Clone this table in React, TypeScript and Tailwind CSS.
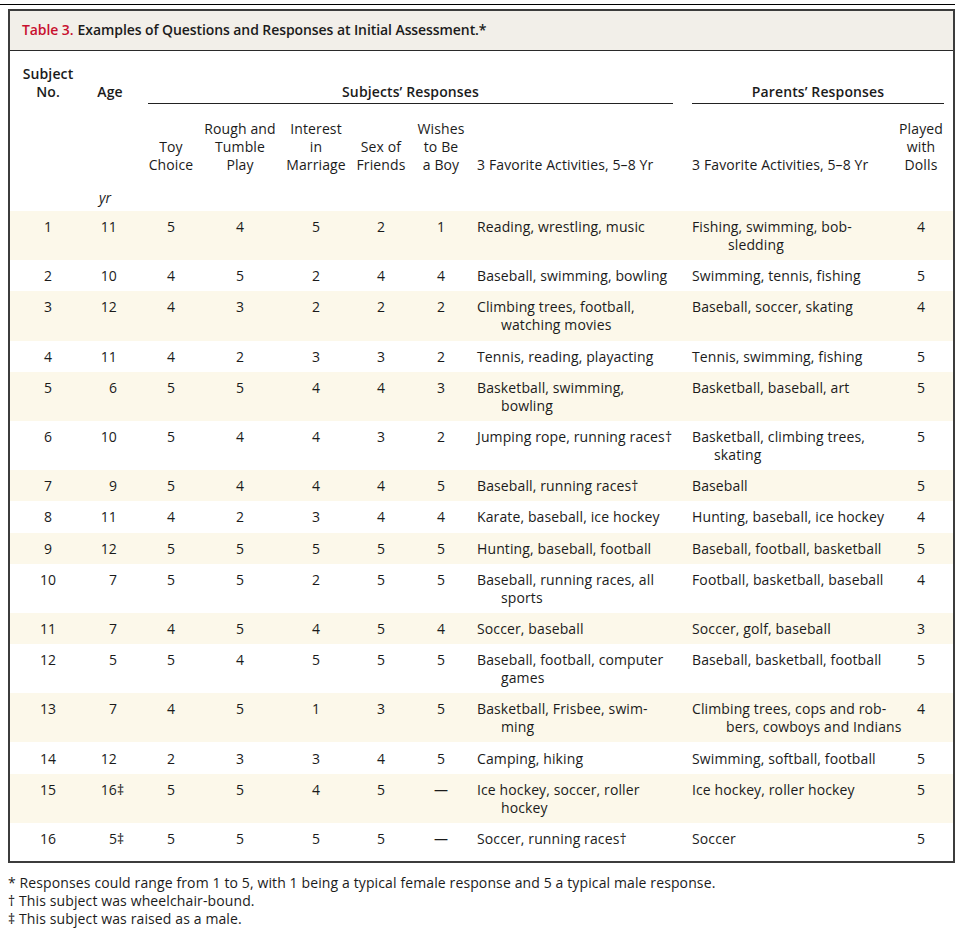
import React from "react";

type Row = {
  no: string;
  age: string;
  ageMark?: boolean;
  v: string[];
  subj: string[];
  subjIndent?: number;
  par: string[];
  parIndent?: number;
  dolls: string;
};

const rows: Row[] = [
  { no: "1", age: "11", v: ["5", "4", "5", "2", "1"], subj: ["Reading, wrestling, music"], par: ["Fishing, swimming, bob-", "sledding"], parIndent: 36, dolls: "4" },
  { no: "2", age: "10", v: ["4", "5", "2", "4", "4"], subj: ["Baseball, swimming, bowling"], par: ["Swimming, tennis, fishing"], dolls: "5" },
  { no: "3", age: "12", v: ["4", "3", "2", "2", "2"], subj: ["Climbing trees, football,", "watching movies"], subjIndent: 24, par: ["Baseball, soccer, skating"], dolls: "4" },
  { no: "4", age: "11", v: ["4", "2", "3", "3", "2"], subj: ["Tennis, reading, playacting"], par: ["Tennis, swimming, fishing"], dolls: "5" },
  { no: "5", age: "6", v: ["5", "5", "4", "4", "3"], subj: ["Basketball, swimming,", "bowling"], par: ["Basketball, baseball, art"], dolls: "5" },
  { no: "6", age: "10", v: ["5", "4", "4", "3", "2"], subj: ["Jumping rope, running races†"], par: ["Basketball, climbing trees,", "skating"], parIndent: 22, dolls: "5" },
  { no: "7", age: "9", v: ["5", "4", "4", "4", "5"], subj: ["Baseball, running races†"], par: ["Baseball"], dolls: "5" },
  { no: "8", age: "11", v: ["4", "2", "3", "4", "4"], subj: ["Karate, baseball, ice hockey"], par: ["Hunting, baseball, ice hockey"], dolls: "4" },
  { no: "9", age: "12", v: ["5", "5", "5", "5", "5"], subj: ["Hunting, baseball, football"], par: ["Baseball, football, basketball"], dolls: "5" },
  { no: "10", age: "7", v: ["5", "5", "2", "5", "5"], subj: ["Baseball, running races, all", "sports"], par: ["Football, basketball, baseball"], dolls: "4" },
  { no: "11", age: "7", v: ["4", "5", "4", "5", "4"], subj: ["Soccer, baseball"], par: ["Soccer, golf, baseball"], dolls: "3" },
  { no: "12", age: "5", v: ["5", "4", "5", "5", "5"], subj: ["Baseball, football, computer", "games"], par: ["Baseball, basketball, football"], dolls: "5" },
  { no: "13", age: "7", v: ["4", "5", "1", "3", "5"], subj: ["Basketball, Frisbee, swim-", "ming"], par: ["Climbing trees, cops and rob-", "bers, cowboys and Indians"], parIndent: 34, dolls: "4" },
  { no: "14", age: "12", v: ["2", "3", "3", "4", "5"], subj: ["Camping, hiking"], par: ["Swimming, softball, football"], dolls: "5" },
  { no: "15", age: "16", ageMark: true, v: ["5", "5", "4", "5", "—"], subj: ["Ice hockey, soccer, roller", "hockey"], par: ["Ice hockey, roller hockey"], dolls: "5" },
  { no: "16", age: "5", ageMark: true, v: ["5", "5", "5", "5", "—"], subj: ["Soccer, running races†"], par: ["Soccer"], dolls: "5" },
];

const GRID = "grid grid-cols-[76px_48px_74px_64px_88px_42px_72px_215px_206px_52px]";

function Lines({ lines, indent }: { lines: string[]; indent?: number }) {
  return (
    <div className="flex flex-col whitespace-nowrap">
      {lines.map((l, i) => (
        <span key={i} style={i > 0 ? { paddingLeft: indent ?? 24 } : undefined}>
          {l}
        </span>
      ))}
    </div>
  );
}

function C({ children, className = "" }: { children: React.ReactNode; className?: string }) {
  return <div className={`flex flex-col items-center whitespace-nowrap ${className}`}>{children}</div>;
}

export default function App() {
  return (
    <div
      className="w-[962px] bg-white text-[14px] leading-[18px] tracking-[0.12px] text-[#1b1b1b]"
      style={{ fontFamily: '"Open Sans", "Liberation Sans", sans-serif' }}
    >
      <div className="pt-[4px]">
        <div className="h-px w-[955px] bg-black" />
      </div>
      <div className="ml-[8px] mt-[4px] w-[947px] border-2 border-[#3c3c3c]">
        <div className="flex h-[40px] items-center border-b border-[#2a2a2a] bg-[#f2efe9] pb-[2px] pl-[12px] font-semibold tracking-[-0.08px]">
          <span className="text-[#c8102e]">Table 3.</span>
          <span className="ml-[4px]">Examples of Questions and Responses at Initial Assessment.*</span>
        </div>

        {/* Header */}
        <div className="pt-[14px]">
          <div className={`${GRID} items-end`}>
            <C className="font-semibold pb-[3px]">
              <span>Subject</span>
              <span>No.</span>
            </C>
            <C className="font-semibold pb-[3px]">
              <span>Age</span>
            </C>
            <div className="col-span-6 ml-[14px] mr-[16px] flex justify-center border-b border-[#222] pb-[2px] font-semibold">
              Subjects’ Responses
            </div>
            <div className="col-span-2 ml-[3px] mr-[3px] flex justify-center border-b border-[#222] pb-[2px] font-semibold">
              Parents’ Responses
            </div>
          </div>
          <div className={`${GRID} mt-[16px] items-end`}>
            <div />
            <div />
            <C>
              <span>Toy</span>
              <span>Choice</span>
            </C>
            <C>
              <span>Rough and</span>
              <span>Tumble</span>
              <span>Play</span>
            </C>
            <C>
              <span>Interest</span>
              <span>in</span>
              <span>Marriage</span>
            </C>
            <C>
              <span>Sex of</span>
              <span>Friends</span>
            </C>
            <C className="pl-[6px]">
              <span>Wishes</span>
              <span>to Be</span>
              <span>a Boy</span>
            </C>
            <div className="pl-[3px] whitespace-nowrap">3 Favorite Activities, 5–8 Yr</div>
            <div className="pl-[3px] whitespace-nowrap">3 Favorite Activities, 5–8 Yr</div>
            <C>
              <span>Played</span>
              <span>with</span>
              <span>Dolls</span>
            </C>
          </div>
          <div className={`${GRID} mt-[15px] pb-[4px]`}>
            <div />
            <div className="pr-[10px] text-center italic">yr</div>
          </div>
        </div>

        {/* Body */}
        <div className="pb-[7px]">
          {rows.map((r, i) => (
            <div
              key={r.no}
              className={`${GRID} items-start pb-[6.1px] pt-[7.1px] ${i % 2 === 0 ? "bg-[#fcf8ea]" : "bg-white"}`}
            >
              <C>{r.no}</C>
              <div className="pr-[17px] text-right whitespace-nowrap">
                {r.age}
                {r.ageMark ? <span className="inline-block w-0">‡</span> : null}
              </div>
              <C>{r.v[0]}</C>
              <C>{r.v[1]}</C>
              <C>{r.v[2]}</C>
              <C>{r.v[3]}</C>
              <C className="pl-[6px]">{r.v[4]}</C>
              <div className="pl-[3px]">
                <Lines lines={r.subj} indent={r.subjIndent} />
              </div>
              <div className="pl-[3px]">
                <Lines lines={r.par} indent={r.parIndent} />
              </div>
              <C>{r.dolls}</C>
            </div>
          ))}
        </div>
      </div>

      <div className="mt-[11px] pl-[8px] leading-[18px]">
        <div>* Responses could range from 1 to 5, with 1 being a typical female response and 5 a typical male response.</div>
        <div>† This subject was wheelchair-bound.</div>
        <div>‡ This subject was raised as a male.</div>
      </div>
    </div>
  );
}
